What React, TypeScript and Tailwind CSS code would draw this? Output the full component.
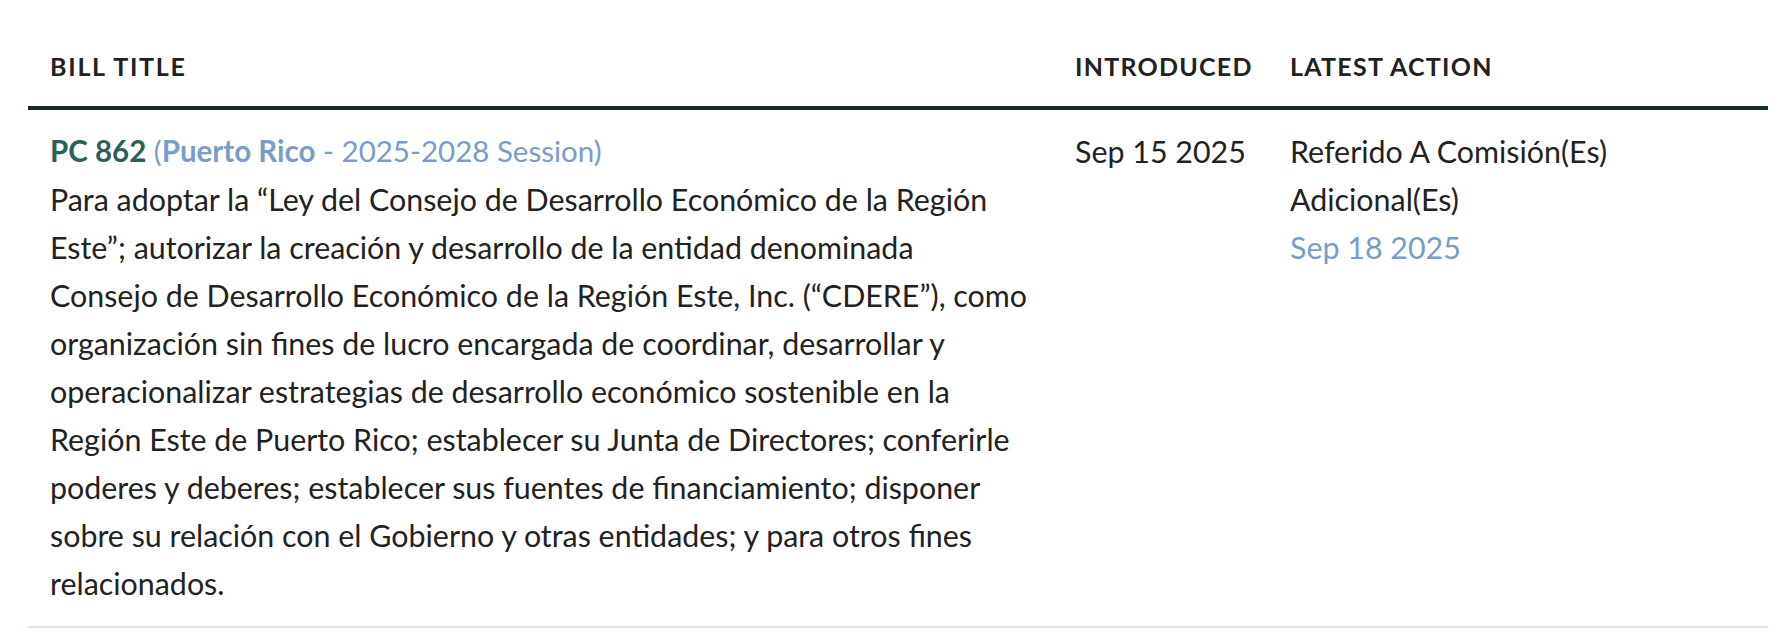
import React from "react";

const lines = [
  "Para adoptar la “Ley del Consejo de Desarrollo Económico de la Región",
  "Este”; autorizar la creación y desarrollo de la entidad denominada",
  "Consejo de Desarrollo Económico de la Región Este, Inc. (“CDERE”), como",
  "organización sin fines de lucro encargada de coordinar, desarrollar y",
  "operacionalizar estrategias de desarrollo económico sostenible en la",
  "Región Este de Puerto Rico; establecer su Junta de Directores; conferirle",
  "poderes y deberes; establecer sus fuentes de financiamiento; disponer",
  "sobre su relación con el Gobierno y otras entidades; y para otros fines",
  "relacionados.",
];

export default function App() {
  return (
    <div
      className="w-[1782px] h-[638px] bg-white text-[#222222]"
      style={{ fontFamily: "Lato, 'Noto Sans', sans-serif" }}
    >
      <div className="pt-[48px] pl-[28px] pr-[14px]">
        <div className="flex border-b-[4px] border-[#14302e]">
          <div className="w-[1025px] pl-[22px] pb-[22px] text-[25px] leading-[36px] font-bold tracking-[0.07em] text-[#222]">
            BILL TITLE
          </div>
          <div className="w-[215px] pl-[22px] pb-[22px] text-[25px] leading-[36px] font-bold tracking-[0.05em] text-[#222]">
            INTRODUCED
          </div>
          <div className="flex-1 pl-[22px] pb-[22px] text-[25px] leading-[36px] font-bold tracking-[0.05em] text-[#222]">
            LATEST ACTION
          </div>
        </div>
        <div className="flex border-b-2 border-[#dde6f0] pt-[17px] pb-[19px] text-[30.4px] leading-[48px]">
          <div className="w-[1025px] pl-[22px] whitespace-nowrap">
            <div className="text-[29.5px]">
              <span className="font-bold text-[#2d5f5b]">PC 862</span>{" "}
              <span className="text-[#7a9cc8]">
                (<span className="font-bold">Puerto Rico</span> - 2025-2028 Session)
              </span>
            </div>
            {lines.map((l, i) => (
              <div key={i}>{l}</div>
            ))}
          </div>
          <div className="w-[215px] pl-[22px] whitespace-nowrap">Sep 15 2025</div>
          <div className="flex-1 pl-[22px] whitespace-nowrap">
            <div>Referido A Comisión(Es)</div>
            <div>Adicional(Es)</div>
            <div className="text-[#7a9cc8]">Sep 18 2025</div>
          </div>
        </div>
      </div>
    </div>
  );
}
